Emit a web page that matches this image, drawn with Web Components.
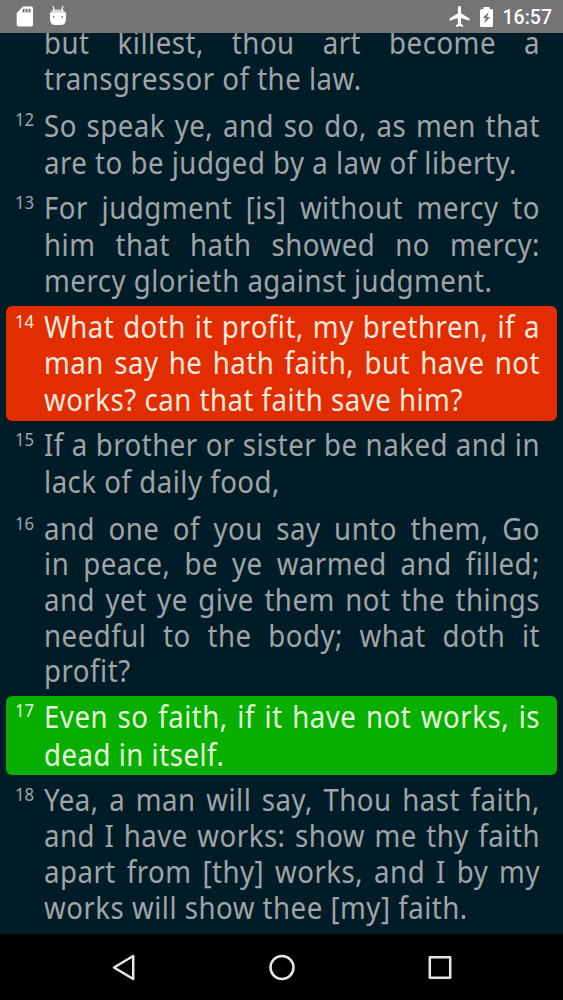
<!DOCTYPE html>
<html lang="en">
<head>
<meta charset="utf-8">
<title>James 2</title>
<style>
    body {
        margin: 0;
        background-color: #001d27;
        overflow: hidden;
    }
</style>
</head>
<body>

<reader-screen>
    <status-bar slot="status" time="16:57"></status-bar>

    <bible-verse pitch="36">
        <verse-line>but killest, thou art become a</verse-line>
        <verse-line last>transgressor of the law.</verse-line>
    </bible-verse>
    <bible-verse number="12" pitch="37">
        <verse-line>So speak ye, and so do, as men that</verse-line>
        <verse-line last>are to be judged by a law of liberty.</verse-line>
    </bible-verse>
    <bible-verse number="13" pitch="36.4">
        <verse-line>For judgment [is] without mercy to</verse-line>
        <verse-line>him that hath showed no mercy:</verse-line>
        <verse-line last>mercy glorieth against judgment.</verse-line>
    </bible-verse>
    <bible-verse number="14" pitch="36.3" mark="red">
        <verse-line>What doth it profit, my brethren, if a</verse-line>
        <verse-line>man say he hath faith, but have not</verse-line>
        <verse-line last>works? can that faith save him?</verse-line>
    </bible-verse>
    <bible-verse number="15" pitch="36.9">
        <verse-line>If a brother or sister be naked and in</verse-line>
        <verse-line last>lack of daily food,</verse-line>
    </bible-verse>
    <bible-verse number="16" pitch="35.6">
        <verse-line>and one of you say unto them, Go</verse-line>
        <verse-line>in peace, be ye warmed and filled;</verse-line>
        <verse-line>and yet ye give them not the things</verse-line>
        <verse-line>needful to the body; what doth it</verse-line>
        <verse-line last>profit?</verse-line>
    </bible-verse>
    <bible-verse number="17" pitch="37.2" mark="green">
        <verse-line>Even so faith, if it have not works, is</verse-line>
        <verse-line last>dead in itself.</verse-line>
    </bible-verse>
    <bible-verse number="18" pitch="36">
        <verse-line>Yea, a man will say, Thou hast faith,</verse-line>
        <verse-line>and I have works: show me thy faith</verse-line>
        <verse-line>apart from [thy] works, and I by my</verse-line>
        <verse-line last>works will show thee [my] faith.</verse-line>
    </bible-verse>

    <nav-bar slot="nav"></nav-bar>
</reader-screen>

<script>
class ReaderScreen extends HTMLElement {
    constructor() {
        super();

        this.attachShadow({ mode: "open" }).innerHTML = `
            <style>
                :host {
                    display: flex;
                    flex-direction: column;
                    height: 1000px;
                    background-color: #001d27;
                    color: #a0a4a9;
                    font-family: "Noto Sans", sans-serif;
                }

                /* scrolled so that the first verse is cut by the status bar */
                main {
                    flex: 1;
                    min-height: 0;
                    overflow: hidden;
                    display: flex;
                    flex-direction: column;
                    justify-content: flex-end;
                    gap: 4.4px;
                    padding: 0 6px 5px;
                }
            </style>

            <slot name="status"></slot>
            <main><slot></slot></main>
            <slot name="nav"></slot>
        `;
    }
}

class StatusBar extends HTMLElement {
    constructor() {
        super();

        this.attachShadow({ mode: "open" }).innerHTML = `
            <style>
                :host {
                    display: flex;
                    flex: none;
                    align-items: center;
                    justify-content: space-between;
                    box-sizing: border-box;
                    height: 33px;
                    padding: 0 11px 0 16px;
                    background-color: #757376;
                    color: #fff;
                    font: 500 19.5px/33px Roboto, sans-serif;
                }

                div {
                    display: flex;
                    align-items: center;
                }

                span {
                    padding-top: 1px;
                }

                svg {
                    display: block;
                    fill: #fff;
                }

                .left { gap: 15px; }
                .plane { margin-right: 10px; }
                .battery { margin-right: 10px; }
            </style>

            <div class="left">
                <svg width="18" height="21" viewBox="0 0 18 21">
                    <path fill-rule="evenodd" d="M7 .5h8.200q1.800 0 1.800 1.800v16.400q0 1.800-1.800 1.800H2.500q-1.800 0-1.800-1.800V7zM6.600 2.800v3.800h2V2.800zm3 0v3.800h2V2.800zm3 0v3.800h2V2.800z"/>
                </svg>
                <svg width="18" height="21" viewBox="0 0 18 21">
                    <path d="M4 .3l1.300 4.200M14 .3l-1.300 4.200" stroke="#fff" stroke-width="1.200"/>
                    <path d="M2 6.500q.5-3 3.500-3h7q3 0 3.500 3z" opacity=".7"/>
                    <path fill-rule="evenodd" d="M2.300 6.300h13.400q1.500 0 1.500 1.500l-.4 6.700q-.6 4.500-5 4.500H6.200q-4.400 0-5-4.500L.8 7.800q0-1.500 1.500-1.500zM4.800 10a.8.8 0 1 0 .01 0zM13.200 10a.8.8 0 1 0 .01 0z"/>
                </svg>
            </div>
            <div>
                <svg class="plane" width="21" height="21" viewBox="2 2 19 20">
                    <path d="M21 16v-2l-8-5V3.500c0-.83-.67-1.500-1.500-1.500S10 2.670 10 3.500V9l-8 5v2l8-2.500V19l-2 1.500V22l3.500-1 3.500 1v-1.500L13 19v-5.500l8 2.500z"/>
                </svg>
                <svg class="battery" width="13" height="20" viewBox="0 0 13 20">
                    <path fill-rule="evenodd" d="M3.500 0h6v2h2q1.500 0 1.500 1.500v15q0 1.500-1.500 1.500h-10Q0 20 0 18.500v-15Q0 2 1.500 2h2zM8.800 5L2.700 11h3l-1.700 5.500 6.300-6.500H7z"/>
                </svg>
                <span></span>
            </div>
        `;
    }

    connectedCallback() {
        this.shadowRoot.querySelector("span").textContent = this.getAttribute("time");
    }
}

class BibleVerse extends HTMLElement {
    constructor() {
        super();

        this.attachShadow({ mode: "open" }).innerHTML = `
            <style>
                :host {
                    display: flex;
                    flex: none;
                    box-sizing: border-box;
                    padding: 2.500px 17px 2.700px 9px;
                    border-radius: 6px;
                }

                :host([mark="red"]) {
                    background-color: #e22d00;
                    color: #fdeadf;
                }

                :host([mark="green"]) {
                    background-color: #08ae00;
                    color: #e4fbdc;
                }

                .number {
                    flex: none;
                    width: 29px;
                    font-size: 18px;
                    line-height: 25px;
                    transform: scaleX(0.93);
                    transform-origin: left;
                }

                .text {
                    flex: 1;
                    min-width: 0;
                }
            </style>

            <div class="number"></div>
            <div class="text"><slot></slot></div>
        `;
    }

    connectedCallback() {
        this.shadowRoot.querySelector(".number").textContent = this.getAttribute("number") || "";
        this.style.setProperty("--pitch", this.getAttribute("pitch") + "px");
    }
}

class VerseLine extends HTMLElement {
    constructor() {
        super();

        // the face is slightly narrowed, so the line is laid out wider by the same factor
        this.attachShadow({ mode: "open" }).innerHTML = `
            <style>
                :host {
                    display: block;
                    height: var(--pitch);
                    --narrow: 0.92;
                }

                div {
                    width: calc(100% / var(--narrow));
                    font-size: 30px;
                    line-height: var(--pitch);
                    letter-spacing: 0.55px;
                    white-space: nowrap;
                    text-align: justify;
                    text-align-last: justify;
                    transform: scaleX(var(--narrow));
                    transform-origin: left;
                }

                :host([last]) div {
                    text-align-last: left;
                }
            </style>

            <div><slot></slot></div>
        `;
    }
}

class NavBar extends HTMLElement {
    constructor() {
        super();

        this.attachShadow({ mode: "open" }).innerHTML = `
            <style>
                :host {
                    display: flex;
                    flex: none;
                    justify-content: center;
                    align-items: center;
                    gap: 130px;
                    height: 66px;
                    background-color: #000;
                }

                svg {
                    fill: none;
                    stroke: #e6e6e6;
                    stroke-width: 2.500;
                    stroke-linejoin: round;
                }
            </style>

            <svg width="28" height="28" viewBox="0 0 28 28"><path d="M23.200 3v23L4 14.500z"/></svg>
            <svg width="28" height="28" viewBox="0 0 28 28"><circle cx="14" cy="14.500" r="11.500"/></svg>
            <svg width="28" height="28" viewBox="0 0 28 28"><rect x="3.800" y="4.300" width="20.400" height="20.400"/></svg>
        `;
    }
}

customElements.define("reader-screen", ReaderScreen);
customElements.define("status-bar", StatusBar);
customElements.define("bible-verse", BibleVerse);
customElements.define("verse-line", VerseLine);
customElements.define("nav-bar", NavBar);
</script>
</body>
</html>
